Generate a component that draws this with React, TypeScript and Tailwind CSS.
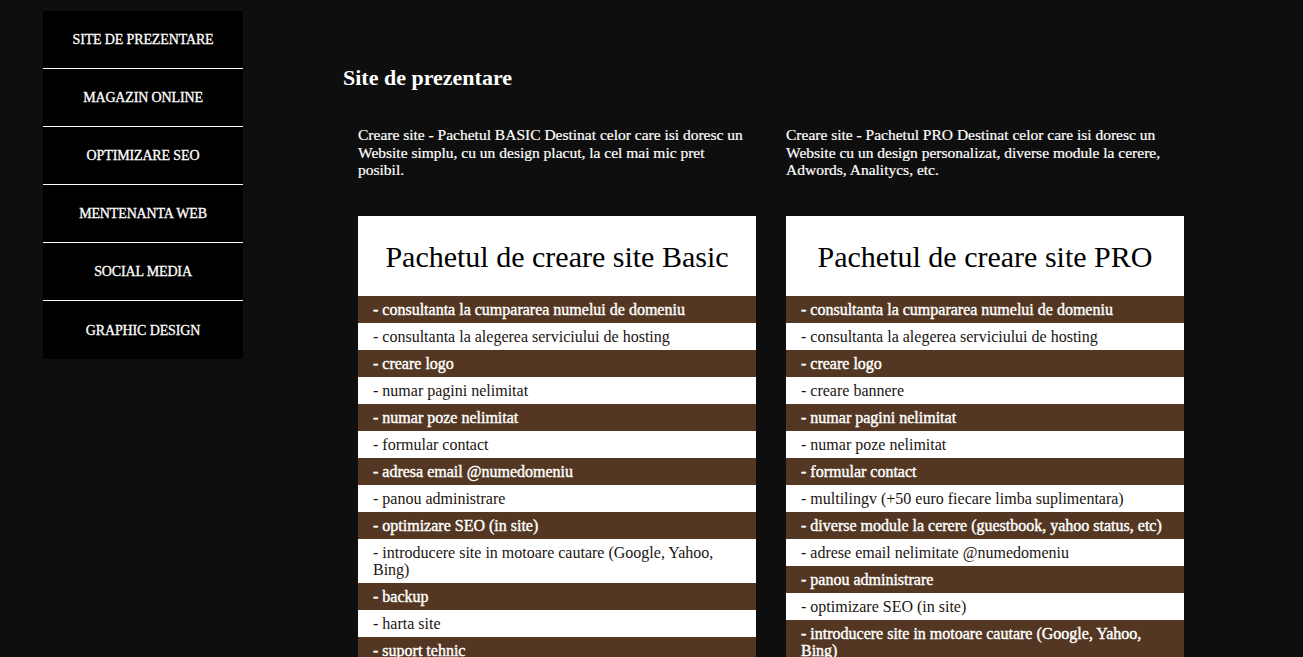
import React from "react";

const menu = [
  "Site de prezentare",
  "Magazin online",
  "Optimizare SEO",
  "Mentenanta web",
  "Social media",
  "Graphic design",
];

const packages = [
  {
    intro:
      "Creare site - Pachetul BASIC Destinat celor care isi doresc un Website simplu, cu un design placut, la cel mai mic pret posibil.",
    title: "Pachetul de creare site Basic",
    items: [
      "consultanta la cumpararea numelui de domeniu",
      "consultanta la alegerea serviciului de hosting",
      "creare logo",
      "numar pagini nelimitat",
      "numar poze nelimitat",
      "formular contact",
      "adresa email @numedomeniu",
      "panou administrare",
      "optimizare SEO (in site)",
      "introducere site in motoare cautare (Google, Yahoo, Bing)",
      "backup",
      "harta site",
      "suport tehnic",
      "garantie",
    ],
  },
  {
    intro:
      "Creare site - Pachetul PRO Destinat celor care isi doresc un Website cu un design personalizat, diverse module la cerere, Adwords, Analitycs, etc.",
    title: "Pachetul de creare site PRO",
    items: [
      "consultanta la cumpararea numelui de domeniu",
      "consultanta la alegerea serviciului de hosting",
      "creare logo",
      "creare bannere",
      "numar pagini nelimitat",
      "numar poze nelimitat",
      "formular contact",
      "multilingv (+50 euro fiecare limba suplimentara)",
      "diverse module la cerere (guestbook, yahoo status, etc)",
      "adrese email nelimitate @numedomeniu",
      "panou administrare",
      "optimizare SEO (in site)",
      "introducere site in motoare cautare (Google, Yahoo, Bing)",
      "backup",
      "harta site",
    ],
  },
];

export default function App() {
  return (
    <div
      className="min-h-screen w-full bg-[#0e0e0e] text-white flex items-start"
      style={{ fontFamily: '"Liberation Serif", serif' }}
    >
      {/* Sidebar menu */}
      <nav className="ml-[43px] mt-[11px] w-[200px] shrink-0 bg-black flex flex-col">
        {menu.map((label, i) => (
          <a
            key={label}
            href="#"
            className={
              "h-[58px] flex items-center justify-center uppercase text-[14px] tracking-[-0.01em] text-white [-webkit-text-stroke:0.3px_white] " +
              (i < menu.length - 1 ? "border-b border-white" : "")
            }
          >
            {label}
          </a>
        ))}
      </nav>

      {/* Content */}
      <main className="ml-[100px] pt-[64px] flex flex-col">
        <h1 className="text-[22px] font-bold leading-[28px]">Site de prezentare</h1>

        <div className="pl-[15px] mt-[34px] flex gap-[30px]">
          {packages.map((pkg) => (
            <div key={pkg.title} className="w-[398px] flex flex-col">
              <p className="text-[15.5px] leading-[17.5px] h-[90px] pr-2 [-webkit-text-stroke:0.2px_white]">
                {pkg.intro}
              </p>
              <div className="flex flex-col">
                <div className="h-[80px] bg-white text-black flex items-center justify-center text-[30px]">
                  {pkg.title}
                </div>
                {pkg.items.map((item, idx) => (
                  <div
                    key={item}
                    className={
                      "px-[15px] py-[5px] text-[16px] leading-[17px] " +
                      (idx % 2 === 0
                        ? "bg-[#533722] text-white [-webkit-text-stroke:0.4px_white]"
                        : "bg-white text-[#1c1410]")
                    }
                  >
                    - {item}
                  </div>
                ))}
              </div>
            </div>
          ))}
        </div>
      </main>
    </div>
  );
}
